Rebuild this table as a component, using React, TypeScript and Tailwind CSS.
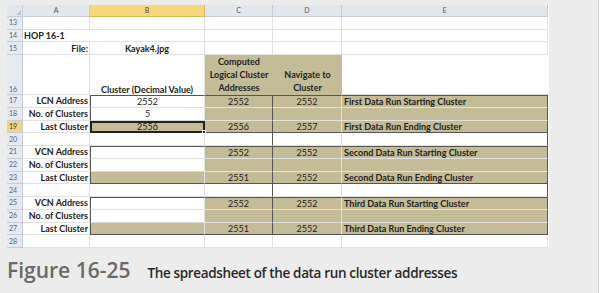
import React from "react";

const TAN = "bg-[#c4bc96]";

type Cell = {
  text?: string;
  cls?: string;
};

// rows 17..28, columns A..E
const labelCls = "justify-end pr-[1px] font-bold";
const numCls = "justify-center";
const descCls = "justify-start pl-[2px] font-bold";

function blockRows(
  r1: [string, string, string, string, string],
  r2: [string, string, string, string, string],
  r3: [string, string, string, string, string]
): Cell[][] {
  const top = "border-t border-t-[#555]";
  const bot = "border-b border-b-[#555]";
  return [
    [
      { text: r1[0], cls: labelCls },
      { text: r1[1], cls: `${numCls} bg-white ${top} border-l border-l-[#555]` },
      { text: r1[2], cls: `${numCls} ${TAN} ${top} border-r border-r-[#555]` },
      { text: r1[3], cls: `${numCls} ${TAN} ${top}` },
      { text: r1[4], cls: `${descCls} ${TAN} ${top} border-r border-r-[#555]` },
    ],
    [
      { text: r2[0], cls: labelCls },
      { text: r2[1], cls: `${numCls} bg-white border-l border-l-[#555] border-b border-b-[#d9d9d9]` },
      { text: r2[2], cls: `${numCls} ${TAN} border-r border-r-[#555]` },
      { text: r2[3], cls: `${numCls} ${TAN}` },
      { text: r2[4], cls: `${descCls} ${TAN} border-r border-r-[#555]` },
    ],
    [
      { text: r3[0], cls: labelCls },
      { text: r3[1], cls: `${numCls} ${TAN} ${bot} border-l border-l-[#555]` },
      { text: r3[2], cls: `${numCls} ${TAN} ${bot} border-r border-r-[#555]` },
      { text: r3[3], cls: `${numCls} ${TAN} ${bot}` },
      { text: r3[4], cls: `${descCls} ${TAN} ${bot} border-r border-r-[#555]` },
    ],
  ];
}

const gapRow = (): Cell[] => [
  { cls: "" },
  { cls: "border-r border-r-[#d9d9d9]" },
  { cls: "border-r border-r-[#555]" },
  { cls: "border-r border-r-[#d9d9d9]" },
  { cls: "border-r border-r-[#555]" },
];

const dataRows: Cell[][] = [
  ...blockRows(
    ["LCN Address", "2552", "2552", "2552", "First Data Run Starting Cluster"],
    ["No. of Clusters", "5", "", "", ""],
    ["Last Cluster", "2556", "2556", "2557", "First Data Run Ending Cluster"]
  ),
  gapRow(),
  ...blockRows(
    ["VCN Address", "", "2552", "2552", "Second Data Run Starting Cluster"],
    ["No. of Clusters", "", "", "", ""],
    ["Last Cluster", "", "2551", "2552", "Second Data Run Ending Cluster"]
  ),
  gapRow(),
  ...blockRows(
    ["VCN Address", "", "2552", "2552", "Third Data Run Starting Cluster"],
    ["No. of Clusters", "", "", "", ""],
    ["Last Cluster", "", "2551", "2552", "Third Data Run Ending Cluster"]
  ),
  [{ cls: "" }, { cls: "" }, { cls: "" }, { cls: "" }, { cls: "" }],
];

const cols = ["A", "B", "C", "D", "E"];
const widths = ["w-[67px]", "w-[115px]", "w-[68px]", "w-[69px]", "w-[206px]"];

function RowNum({ n, active, tall }: { n: number; active?: boolean; tall?: boolean }) {
  return (
    <div
      className={`w-[16px] shrink-0 flex ${tall ? "items-end pb-[1px]" : "items-center"} pl-[2px] text-[7px] border-b border-r border-[#c5cdd8] ${
        active ? "bg-[#f5d57a] text-[#333]" : "bg-[#e6eaf0] text-[#56657a]"
      }`}
    >
      {n}
    </div>
  );
}

function GridCell({ cell, i }: { cell: Cell; i: number }) {
  const c = cell.cls ?? "";
  const hasB = c.includes("border-b");
  const hasR = c.includes("border-r");
  return (
    <div
      className={`${widths[i]} shrink-0 flex items-center whitespace-nowrap overflow-visible ${
        hasB ? "" : "border-b border-b-[#e1e1e1]"
      } ${hasR ? "" : "border-r border-r-[#e1e1e1]"} ${c}`}
    >
      {cell.text}
    </div>
  );
}

export default function App() {
  return (
    <div className="w-[602px] h-[293px] bg-[#ececec] flex overflow-hidden font-['Lato','Open_Sans',sans-serif]">
      <div className="w-[598px] shrink-0 pt-[5px] pl-[7px]">
        {/* sheet */}
        <div className="w-[542px] bg-white text-[9px] text-[#222] leading-none">
          {/* column header */}
          <div className="flex h-[12px]">
            <div className="w-[16px] shrink-0 bg-[#e2e7ee] border-r border-b border-[#c5cdd8] flex items-end justify-end pr-[1px] pb-[1px]">
              <div className="w-0 h-0 border-l-[5px] border-l-transparent border-b-[5px] border-b-[#c0c6ce]" />
            </div>
            {cols.map((c, i) => (
              <div
                key={c}
                className={`${widths[i]} shrink-0 flex items-center justify-center text-[7px] border-r border-b ${
                  c === "B"
                    ? "bg-[#f7d77c] border-[#e0b54a] text-[#444]"
                    : "bg-[#e2e7ee] border-[#c5cdd8] text-[#556]"
                }`}
              >
                {c}
              </div>
            ))}
          </div>

          {/* rows 13-15 */}
          <div className="flex h-[12.7px]">
            <RowNum n={13} />
            {cols.map((c, i) => (
              <GridCell key={c} i={i} cell={{}} />
            ))}
          </div>
          <div className="flex h-[12.7px]">
            <RowNum n={14} />
            <GridCell i={0} cell={{ text: "HOP  16-1", cls: "font-bold pl-[1px] border-r-0" }} />
            {cols.slice(1).map((c, i) => (
              <GridCell key={c} i={i + 1} cell={{}} />
            ))}
          </div>
          <div className="flex h-[12.7px]">
            <RowNum n={15} />
            <GridCell i={0} cell={{ text: "File:", cls: "font-bold justify-end pr-[1px]" }} />
            <GridCell i={1} cell={{ text: "Kayak4.jpg", cls: "font-bold justify-center" }} />
            {cols.slice(2).map((c, i) => (
              <GridCell key={c} i={i + 2} cell={{}} />
            ))}
          </div>

          {/* row 16 */}
          <div className="flex h-[40px]">
            <RowNum n={16} tall />
            <GridCell i={0} cell={{}} />
            <div className="w-[115px] shrink-0 flex items-end justify-center pb-[1px] font-bold border-r border-r-[#e1e1e1]">
              Cluster (Decimal Value)
            </div>
            <div className={`w-[68px] shrink-0 ${TAN} flex flex-col items-center justify-end pb-[1px] font-bold leading-[13px]`}>
              <span>Computed</span>
              <span>Logical Cluster</span>
              <span>Addresses</span>
            </div>
            <div className={`w-[69px] shrink-0 ${TAN} flex flex-col items-center justify-end pb-[1px] font-bold leading-[13px]`}>
              <span>Navigate to</span>
              <span>Cluster</span>
            </div>
            <div className="w-[206px] shrink-0 border-b border-b-[#e1e1e1]" />
          </div>

          {/* rows 17-28 */}
          {dataRows.map((row, ri) => {
            const n = 17 + ri;
            return (
              <div key={n} className="flex h-[12.75px]">
                <RowNum n={n} active={n === 19} />
                {row.map((cell, ci) =>
                  n === 19 && ci === 1 ? (
                    <div
                      key={ci}
                      className={`w-[115px] shrink-0 relative flex items-center justify-center ${TAN} border-2 border-[#222]`}
                    >
                      {cell.text}
                      <div className="absolute right-[-3px] bottom-[-3px] w-[4px] h-[4px] bg-[#222] border border-white" />
                    </div>
                  ) : (
                    <GridCell key={ci} i={ci} cell={cell} />
                  )
                )}
              </div>
            );
          })}
        </div>

        {/* caption */}
        <div className="flex items-baseline mt-[12px] font-['Open_Sans',sans-serif]">
          <span className="text-[21px] font-semibold text-[#6a6a6a] leading-none">Figure 16-25</span>
          <span className="ml-[17px] text-[13.5px] font-semibold tracking-[-0.35px] text-[#2a2a2a] leading-none">
            The spreadsheet of the data run cluster addresses
          </span>
        </div>
      </div>
      <div className="flex-1 bg-white border-l border-l-[#c9d1da]" />
    </div>
  );
}
